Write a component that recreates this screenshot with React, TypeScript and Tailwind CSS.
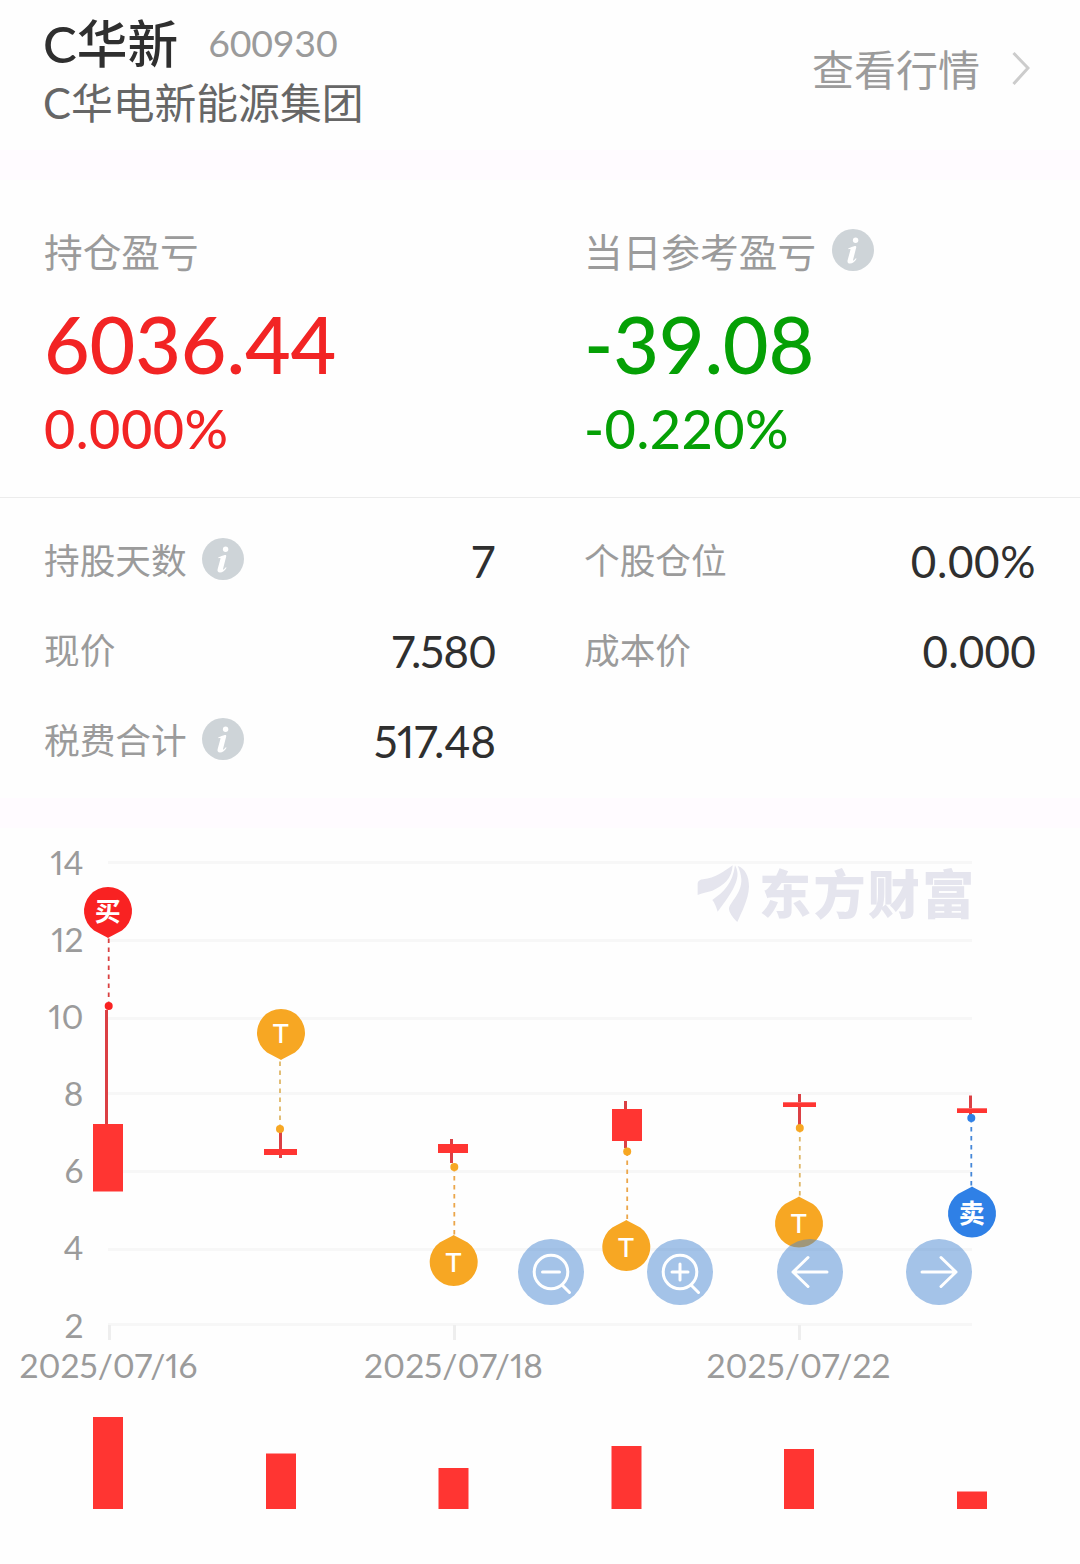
import type { ReactNode } from 'react';

type Stat = { label: string; value: string; info?: boolean; numerals?: string };

const stats: Stat[] = [
  { label: '持股天数', value: '7', info: true },
  { label: '个股仓位', value: '0.00%', numerals: 'tracking-[0.6px]' },
  { label: '现价', value: '7.580', numerals: 'proportional-nums tracking-[-1px]' },
  { label: '成本价', value: '0.000', numerals: 'tracking-[0.2px]' },
  { label: '税费合计', value: '517.48', info: true, numerals: 'proportional-nums tracking-[-0.2px]' },
];

const gridLines = [
  { label: '14', y: 33, textY: 47 },
  { label: '12', y: 111, textY: 124 },
  { label: '10', y: 189, textY: 201 },
  { label: '8', y: 264, textY: 278 },
  { label: '6', y: 342, textY: 355 },
  { label: '4', y: 420, textY: 432 },
  { label: '2', y: 495, textY: 510 },
];

const dates = [
  { label: '2025/07/16', x: 108 },
  { label: '2025/07/18', x: 453 },
  { label: '2025/07/22', x: 798 },
];

const candles = [
  { wickX: 105, high: 182, low: 296, x: 93, w: 30, top: 296, bottom: 363.5 },
  { wickX: 279, high: 304, low: 330, x: 264, w: 33, top: 321, bottom: 327 },
  { wickX: 450, high: 311, low: 335, x: 438, w: 30, top: 316, bottom: 325 },
  { wickX: 624, high: 273, low: 320, x: 612, w: 30, top: 281, bottom: 313 },
  { wickX: 798, high: 266, low: 297, x: 783, w: 33, top: 274.3, bottom: 279 },
  { wickX: 969, high: 267.5, low: 287, x: 957, w: 30, top: 280.3, bottom: 285 },
];

const volumes = [
  { x: 93, top: 589 },
  { x: 266, top: 625.5 },
  { x: 438.5, top: 640 },
  { x: 611.5, top: 618 },
  { x: 784, top: 621 },
  { x: 957, top: 663.5 },
];

const trades = [
  { text: '买', color: '#f92222', line: '#d94141', x: 108, y: 83, tipX: 108.7, dotY: 178, down: true },
  { text: 'T', color: '#f7a723', line: '#dfb768', x: 281, y: 205, tipX: 280, dotY: 301, down: true },
  { text: 'T', color: '#f7a723', line: '#eba64a', x: 453.7, y: 434, tipX: 454.3, dotY: 339, down: false },
  { text: 'T', color: '#f7a723', line: '#eba64a', x: 626.3, y: 419, tipX: 627.2, dotY: 323.5, down: false },
  { text: 'T', color: '#f7a723', line: '#dfb768', x: 799, y: 395.5, tipX: 799.8, dotY: 300, down: false },
  { text: '卖', color: '#2f80e6', line: '#4587d8', x: 972, y: 385.5, tipX: 971.3, dotY: 290, down: false },
];

const InfoIcon = ({ className }: { className?: string }) => (
  <svg viewBox="0 0 42 42" className={`h-[42px] w-[42px] shrink-0 ${className ?? ''}`}>
    <circle cx="21" cy="21" r="21" fill="#ced4d8" />
    <circle cx="23.6" cy="11.3" r="2.7" fill="#fff" />
    <path
      d="M16.4 19.2 C18.5 18.6 20.8 17.4 22.8 17 C24 16.8 24.5 17.4 24.2 18.6 L21.2 30.2 C20.8 31.8 21.4 31.8 22.2 31 L23.8 29.2 L24.6 29.8 C22.8 32.8 20.6 34.6 18 34.6 C15.8 34.6 15.2 33 15.6 31.2 L18.4 21 C18.7 19.9 18.2 19.9 16.4 20.3 Z"
      fill="#fff"
    />
  </svg>
);

const Pnl = ({ label, value, percent, color, info }: { label: string; value: string; percent: string; color: string; info?: boolean }) => (
  <div>
    <div className="flex h-14 items-center text-[38.7px] text-[#9b9b9b]">
      <span className="pt-px">{label}</span>
      {info && <InfoIcon className="mb-1 ml-4" />}
    </div>
    <div className={`mt-[19px] h-[90px] text-[79px] font-medium leading-[90px] tracking-[-0.2px] ${color}`}>{value}</div>
    <div className={`mt-2.5 h-[60px] text-[54px] font-medium leading-[60px] tracking-[0.5px] ${color}`}>{percent}</div>
  </div>
);

const Marker = ({ trade }: { trade: (typeof trades)[number] }) => {
  const edge = trade.down ? trade.y + 27 : trade.y - 27;
  return (
    <g>
      <line x1={trade.tipX} y1={trade.dotY} x2={trade.tipX} y2={edge} stroke={trade.line} strokeWidth="1.8" strokeDasharray="4.5 4.5" />
      <circle cx={trade.tipX} cy={trade.dotY} r="4" fill={trade.color} />
      <path
        d="M0 -27 Q-2 -25.8 -14 -19.5 A24 24 0 1 0 14 -19.5 Q2 -25.8 0 -27 Z"
        transform={`translate(${trade.x} ${trade.y}) rotate(${trade.down ? 180 : 0})`}
        fill={trade.color}
      />
      <text x={trade.x - 0.3} y={trade.y + 9.5} textAnchor="middle" fontSize={trade.text === 'T' ? 27 : 26} fontWeight={trade.text === 'T' ? 500 : 700} fill="#fff">
        {trade.text}
      </text>
    </g>
  );
};

const Watermark = () => (
  <g fill="#e5e5ee">
    <g transform="translate(680 12) scale(0.33333)">
      <path d="M53 165 L53 130 Q55 119 70 118 C105 115 130 95 158 76 C156 115 132 137 97 152 C82 157 66 159 53 165 Z" />
      <path d="M165 76 C186 110 162 152 113 215 C108 200 104 188 97 180 C132 156 158 130 165 76 Z" />
      <path d="M173 78 C195 85 207 108 207 140 C205 180 185 215 172 246 C162 235 148 222 147 206 C150 186 186 160 184 118 C183 102 179 90 173 78 Z" />
    </g>
    <text x="759" y="86" fontSize="52" fontWeight="900" letterSpacing="2.4">东方财富</text>
  </g>
);

const ChartButton = ({ label, children }: { label: string; children: ReactNode }) => (
  <button aria-label={label} className="h-[66px] w-[66px] rounded-full bg-[#4a87d2]/50">
    <svg viewBox="0 0 66 66" fill="none" stroke="#fff" strokeWidth="3" strokeLinecap="round" strokeLinejoin="round">
      {children}
    </svg>
  </button>
);

const TradeChart = () => (
  <div className="relative h-[736px]">
    <svg viewBox="0 0 1080 736" className="block h-[736px] w-[1080px] proportional-nums">
      {gridLines.map((line) => (
        <g key={line.label}>
          <rect x="108" y={line.y} width="864" height="3" fill="#f7f7f7" />
          <text x="83.5" y={line.textY} textAnchor="end" fontSize="33.5" fill="#9b9b9b">{line.label}</text>
        </g>
      ))}
      {dates.map((date) => (
        <g key={date.label}>
          <rect x={date.x} y="497" width="3" height="15" fill="#eeeeee" />
          <text x={date.x + 0.5} y="550" textAnchor="middle" fontSize="33.5" fill="#9b9b9b">{date.label}</text>
        </g>
      ))}
      <Watermark />
      {candles.map((c) => (
        <g key={c.x}>
          <rect x={c.x} y={c.top} width={c.w} height={c.bottom - c.top} fill="#ff3532" />
          <rect x={c.wickX} y={c.high} width="3" height={c.top - c.high} fill="#db4044" />
          {c.low > c.bottom && <rect x={c.wickX} y={c.bottom} width="3" height={c.low - c.bottom} fill="#db4044" />}
        </g>
      ))}
      {trades.map((trade) => (
        <Marker key={trade.x} trade={trade} />
      ))}
      {volumes.map((v) => (
        <rect key={v.x} x={v.x} y={v.top} width="30" height={681 - v.top} fill="#ff3532" />
      ))}
    </svg>

    {/* controls floating over the chart */}
    <div className="absolute left-[518px] top-[411px] flex w-[454px] justify-between">
      <ChartButton label="缩小">
        <circle cx="33" cy="33" r="16.8" />
        <path d="M24.5 33 H41.5 M44.5 46.5 L51.5 53.5" />
      </ChartButton>
      <ChartButton label="放大">
        <circle cx="33" cy="33" r="16.8" />
        <path d="M25 33 H41 M33 25 V41 M44.5 46.5 L51.5 53.5" />
      </ChartButton>
      <ChartButton label="向左">
        <path d="M50 33 H16 M31 18.5 L16 33 L31 47.5" />
      </ChartButton>
      <ChartButton label="向右">
        <path d="M16 33 H50 M35 18.5 L50 33 L35 47.5" />
      </ChartButton>
    </div>
  </div>
);

const App = () => {
  return (
    <div lang="zh-CN" className="h-[1564px] w-[1080px] overflow-hidden bg-[#fefefe] font-['Lato','Noto_Sans_CJK_SC',sans-serif] text-[#2f2f2f]">
      <header className="flex h-[150px] items-center justify-between pb-3 pl-[43px] pr-[50px]">
        <div className="pt-[7px]">
          <div className="flex h-[60px] items-center">
            <h1 className="pt-0.5 text-[50.7px] font-medium leading-[60px]">C华新</h1>
            <span className="ml-[30px] text-[37.5px] leading-[58px] tracking-[-0.2px] text-[#9b9b9b]">600930</span>
          </div>
          <p className="h-[60px] text-[41.8px] leading-[60px] text-[#666666]">C华电新能源集团</p>
        </div>
        <div className="flex items-center text-[42px] leading-[60px] text-[#9b9b9b]">
          <span className="pt-0.5">查看行情</span>
          <svg viewBox="0 0 18 36" className="ml-8 h-9 w-[18px]" fill="none" stroke="#cccccc" strokeWidth="3">
            <path d="M1.5 2 L16 17 L1.5 33" />
          </svg>
        </div>
      </header>

      <div className="h-[30px] bg-[#fffbff]" />

      <section className="grid h-[318px] grid-cols-2 gap-x-[88px] border-b border-[#ececec] px-11 pt-11">
        <Pnl label="持仓盈亏" value="6036.44" percent="0.000%" color="text-[#f22424]" />
        <Pnl label="当日参考盈亏" value="-39.08" percent="-0.220%" color="text-[#05a005]" info />
      </section>

      <section className="grid h-[300px] auto-rows-[90px] grid-cols-2 gap-x-[88px] px-11 pt-4">
        {stats.map((stat) => (
          <div key={stat.label} className="flex items-center justify-between">
            <div className="flex items-center text-[35.7px] text-[#9b9b9b]">
              <span className="pt-1">{stat.label}</span>
              {stat.info && <InfoIcon className="ml-[15px]" />}
            </div>
            <span className={`pt-[3px] text-[44px] ${stat.numerals ?? ''}`}>{stat.value}</span>
          </div>
        ))}
      </section>

      <div className="h-[30px] bg-[#fffbff]" />

      <TradeChart />
    </div>
  );
};

export default App;
